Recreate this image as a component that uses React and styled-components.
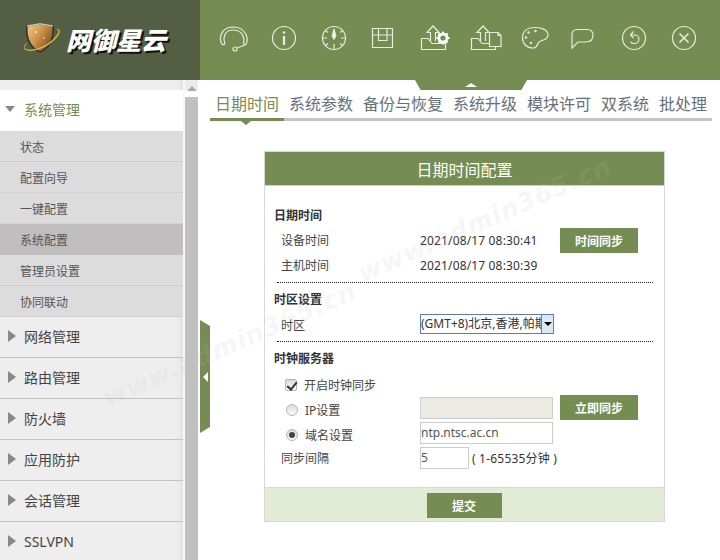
import React from 'react';
import styled, { createGlobalStyle } from 'styled-components';

const GREEN = '#758c52';
const FONT = '"Noto Sans", "Noto Sans CJK SC", sans-serif';

const Global = createGlobalStyle`
  html, body { margin: 0; padding: 0; background: #fff; }
  body { font-family: ${FONT}; color: #333; }
  * { box-sizing: border-box; }
`;

const Page = styled.div`
  position: relative; width: 720px; height: 560px; overflow: hidden;
  display: flex; flex-direction: column;
`;
const Header = styled.header`display: flex; height: 80px; flex: none; background: ${GREEN};`;
const LogoArea = styled.div`
  width: 200px; flex: none; background: #535e42;
  display: flex; align-items: center; padding: 0 0 2px 24px; gap: 4px;
`;
const LogoText = styled.div`
  font-family: "Noto Sans CJK SC", sans-serif; font-size: 25px; line-height: 30px; font-weight: 900; font-style: italic;
  color: #fff; text-shadow: 2px 2px 0 #111; white-space: nowrap;
`;
const IconNav = styled.nav`display: flex; padding: 20px 0 0 9px; align-items: flex-start;`;
const IconSlot = styled.div`width: 50px; height: 36px; display: flex; justify-content: center;`;
const Notch = styled.div`
  position: absolute; left: 415px; top: 80px; width: 112px; height: 10px;
  background: ${GREEN}; clip-path: polygon(0 0, 100% 0, 95% 100%, 5% 100%);
  &::after {
    content: ''; position: absolute; left: 50px; top: 3px;
    border-left: 6px solid transparent; border-right: 6px solid transparent; border-bottom: 4px solid #fff;
  }
`;

const Body = styled.div`flex: 1; display: flex; min-height: 0;`;
const Side = styled.aside`width: 200px; flex: none; display: flex; overflow: hidden;`;
const Menu = styled.div`
  width: 183px; flex: none; background: #eee; padding-top: 10px;
  box-shadow: inset -8px 0 8px -8px #d8d8d8;
`;
const GroupHead = styled.div`
  height: 41px; display: flex; align-items: center;
  gap: ${p => (p.$open ? 9 : 8)}px; padding: 0 0 ${p => (p.$open ? 4 : 2)}px ${p => (p.$open ? 5 : 8)}px;
  font-size: 14px; background: ${p => (p.$open ? '#fff' : 'transparent')};
  color: ${p => (p.$open ? GREEN : '#444')};
  border-bottom: ${p => (p.$open ? '0' : '1px solid #c2c2c2')};
`;
const ArrowDown = styled.i`
  width: 0; height: 0; border-left: 5.5px solid transparent; border-right: 5.5px solid transparent; border-top: 6px solid #888;
`;
const ArrowRight = styled.i`
  width: 0; height: 0; border-top: 6px solid transparent; border-bottom: 6px solid transparent; border-left: 8px solid #888;
`;
const SubItem = styled.div`
  height: 31px; padding: 1px 0 0 20px; display: flex; align-items: center; font-size: 12px; color: #555;
  background: ${p => (p.$active ? '#c0bebe' : '#dcdcdc')};
  border-bottom: 1px solid ${p => (p.$active ? '#c0bebe' : '#d0d0d0')};
`;
const ScrollTrack = styled.div`
  width: 17px; flex: none; padding: 6px 2px 0; background: linear-gradient(#ececec 0 10px, #fff 10px);
  display: flex; flex-direction: column; align-items: center; border-left: 2px solid #f7f7f7; border-right: 2px solid #fff;
`;
const ScrollUp = styled.i`
  width: 0; height: 0; border-left: 5px solid transparent; border-right: 5px solid transparent; border-bottom: 5px solid #aaa;
`;
const ScrollThumb = styled.div`width: 13px; flex: 1; margin-top: 6px; background: #c0c0c0;`;

const Main = styled.main`position: relative; flex: 1; padding: 0 8px 0 10px; min-width: 0;`;
const Handle = styled.div`
  position: absolute; left: 0; top: 240px; width: 10px; height: 113px; background: ${GREEN};
  clip-path: polygon(0 0, 100% 6px, 100% 107px, 0 100%);
  &::after {
    content: ''; position: absolute; left: 3px; top: 52px;
    border-top: 5px solid transparent; border-bottom: 5px solid transparent; border-right: 5px solid #fff;
  }
`;
const Tabs = styled.div`display: flex; height: 41px; padding-top: 12px; border-bottom: 3px solid #c8c4c4;`;
const Tab = styled.div`
  position: relative; height: 29px; padding: 0 5px; font-size: 16px; line-height: 24px; white-space: nowrap;
  color: ${p => (p.$active ? GREEN : '#667078')};
  ${p => p.$active && `
    border-bottom: 3px solid ${GREEN};
    &::after {
      content: ''; position: absolute; left: 31px; top: 29px;
      border-left: 5px solid transparent; border-right: 5px solid transparent; border-top: 4px solid ${GREEN};
    }
  `}
`;
const Panel = styled.section`
  width: 401px; height: 371px; margin: 30px 0 0 54px; border: 1px solid #d8d8d8;
  display: flex; flex-direction: column;
`;
const PanelTitle = styled.h2`
  margin: 0; height: 34px; flex: none; background: ${GREEN}; color: #fff; font-size: 16px; font-weight: 400;
  display: flex; align-items: center; justify-content: center; border-bottom: 1px solid #ccd3c2;
`;
const PanelBody = styled.div`flex: 1; padding: 18px 0 0 9px; font-size: 12px;`;
const SectionTitle = styled.h3`margin: 0; height: 24px; padding-bottom: 2px; display: flex; align-items: center; font-size: 12px; font-weight: 700; color: #333;`;
const Row = styled.div`display: flex; align-items: center; height: ${p => p.$h || 25}px; padding-left: 7px; color: #444;`;
const Label = styled.div`
  width: 139px; flex: none; padding-top: ${p => p.$shift || 0}px; padding-bottom: ${p => p.$up || 0}px;
  display: flex; align-items: center; gap: ${p => p.$gap || 0}px;
`;
const Value = styled.div`width: 140px; flex: none; display: flex; align-items: center; color: #333; letter-spacing: .15px;`;
const Divider = styled.hr`margin: 4px 11px 5px 3px; height: 0; border: 0; border-top: 1px dotted #222;`;
const Button = styled.button`
  height: 25px; width: ${p => p.$w || 78}px; border: 0; padding: 0; background: ${GREEN}; color: #fff;
  font: 700 12px ${FONT};
`;
const Field = styled.input`
  height: 22px; width: ${p => p.$w || 133}px; border: 1px solid #ccc; padding: 0; font: 12px ${FONT}; color: #555;
  background: ${p => (p.disabled ? '#ebebe4' : '#fff')}; outline: 0;
`;
const SelectBox = styled.div`
  display: flex; height: 20px; width: 134px; border: 1px solid #5a7db5; margin-top: -1px; font-size: 12px; line-height: 18px; color: #333;
`;
const SelectValue = styled.div`flex: 1; overflow: hidden; white-space: nowrap;`;
const SelectArrow = styled.div`
  width: 12px; flex: none; background: #dbe8f8; border-left: 1px solid #5a7db5; display: flex; align-items: center; justify-content: center;
  &::after { content: ''; border-left: 4px solid transparent; border-right: 4px solid transparent; border-top: 4px solid #000; }
`;
const Check = styled.input`
  appearance: none; margin: 0 0 0 ${p => (p.type === 'radio' ? 5 : 4)}px; flex: none; width: 12px; height: 12px; border: 1px solid #b5b5b5;
  border-radius: ${p => (p.type === 'radio' ? '50%' : '2px')};
  background: linear-gradient(#dcdcdc, #fafafa);
  position: relative;
  &:checked::after {
    content: ''; position: absolute;
    ${p => p.type === 'radio'
      ? 'left: 2px; top: 2px; width: 6px; height: 6px; border-radius: 50%; background: #444;'
      : 'left: 3px; top: 0; width: 4px; height: 8px; border: solid #333; border-width: 0 2px 2px 0; transform: rotate(40deg);'}
  }
`;
const Hint = styled.span`margin-left: 3px; white-space: nowrap; color: #333; letter-spacing: .2px;`;
const Footer = styled.div`
  height: 34px; flex: none; background: #e1ebd5; border-top: 1px solid #d8d8d8;
  display: flex; justify-content: center; padding: 5px 1px 0 0;
`;
const Watermark = styled.div`
  position: absolute; left: ${p => p.$x}px; top: ${p => p.$y}px; width: 280px; text-align: center;
  font: italic 700 25px/30px "DejaVu Sans", sans-serif; letter-spacing: 1px; white-space: nowrap;
  color: rgba(190,190,190,.14); transform: rotate(-23.7deg); pointer-events: none;
`;

const IconSvg = styled.svg`
  width: 36px; height: 36px; fill: none; stroke: #e6ecde; stroke-width: 1.2; display: block; overflow: visible;
`;

const Icon = ({ children }) => <IconSvg viewBox="0 0 36 36">{children}</IconSvg>;
const Tray = () => (
  <>
    <path d="M5.5 18.5H12L16 23.5H29.5V29.5H5.5Z" />
    <path d="M14.5 21V12.5H11L17 6L23 12.5H19.5V21" />
  </>
);
const icons = [
  <Icon key="a">
    <path d="M6.5 25C2.5 19 4 7.5 17 7C30 7 33 19 30 24.5" />
    <path d="M9 24C6.5 17 9 10 17 10C26 10 29 17 27.5 24" />
    <path d="M6.5 25L9 24M30 24.5L27.5 24M21 28L29 25" />
    <circle cx="19" cy="29" r="2" />
  </Icon>,
  <Icon key="b">
    <circle cx="18" cy="18" r="11.5" />
    <path d="M18 16V25" strokeWidth="2.2" />
    <circle cx="18" cy="12.5" r="1.3" fill="#e6ecde" stroke="none" />
  </Icon>,
  <Icon key="c">
    <circle cx="18" cy="18" r="11.5" />
    <path d="M18 9L19.8 16L18 19L16.2 16Z" fill="#f2f5ec" />
    <path d="M18 24V29.5M6.5 18H11M25 18H29.5M9.5 10.5L12 12.5M26.5 10.5L24 12.5M9.5 25.5L12 23.5M26.5 25.5L24 23.5" />
  </Icon>,
  <Icon key="d">
    <path d="M6.5 8.5H26.5V27.5H6.5ZM6.5 15H26.5M12.5 8.5V20.5H21V8.5" />
  </Icon>,
  <Icon key="e">
    <Tray />
    <circle cx="27" cy="18" r="4" strokeWidth="3" stroke="#fff" fill={GREEN} />
    <path d="M27 11.5V24.5M20.5 18H33.5M22.4 13.4L31.6 22.6M31.6 13.4L22.4 22.6" stroke="#fff" strokeWidth="1.8" />
    <circle cx="27" cy="18" r="2.6" fill={GREEN} stroke="none" />
  </Icon>,
  <Icon key="f">
    <Tray />
    <path d="M23.5 12.5H32L35 15.5V26.5H23.5Z" fill={GREEN} />
    <path d="M32 12.5V15.5H35" />
  </Icon>,
  <Icon key="g">
    <path d="M19 7.5C11 7.5 6.5 11.5 6.5 18C6.5 24 11 28 17 28C22 28 20.5 24 23 22C26 20 32 20 32 15C32 10 26 7.5 19 7.5Z" />
    <g fill="#e6ecde" stroke="none">
      <circle cx="12.5" cy="12.5" r="1.2" /><circle cx="19.5" cy="11" r="1.2" /><circle cx="10" cy="17.5" r="1.2" /><circle cx="15" cy="23" r="1.2" />
    </g>
  </Icon>,
  <Icon key="h">
    <path d="M11 9.5H21C25 9.5 27 12 27 15C27 19 25 22 20 22H12L6 28V15C6 12 7.5 9.5 11 9.5Z" />
  </Icon>,
  <Icon key="i">
    <circle cx="18" cy="18" r="11.5" />
    <path d="M15 15H18.5C21 15 23 16.8 23 19C23 21.5 21 23.5 18 23.5C16.5 23.5 15.5 23 14.5 22" />
    <path d="M17.5 11.5L14.5 15L17.5 18" />
  </Icon>,
  <Icon key="j">
    <circle cx="18" cy="18" r="11.5" />
    <path d="M13.5 13.5L22.5 22.5M22.5 13.5L13.5 22.5" strokeWidth="1.6" />
  </Icon>,
];

const Shield = () => (
  <svg width="38" height="32" viewBox="0 0 38 32" style={{ display: 'block', flex: 'none' }}>
    <defs>
      <linearGradient id="sh" x1="0" y1="0" x2="1" y2="0.7">
        <stop offset="0" stopColor="#f4cd8c" />
        <stop offset=".5" stopColor="#cf9348" />
        <stop offset="1" stopColor="#7a4c1e" />
      </linearGradient>
    </defs>
    <path d="M3 3L16 0.8L29 3C30 14 27 24 16 29C5 24 2 14 3 3Z" fill="url(#sh)" stroke="#33332f" strokeWidth="1.6" />
    <path d="M3 3L16 0.8L29 3" fill="none" stroke="#c4c4ba" strokeWidth="1.4" />
    <circle cx="12" cy="9" r="1" fill="#fff3d0" />
    <circle cx="20" cy="15" r="0.8" fill="#fff3d0" />
    <path d="M1 26C6 29.5 24 25 33 13C36 9 36 7 33 6" fill="none" stroke="#dcb63e" strokeWidth="1.3" />
    <path d="M1 26C-1 24 1 22 3 20" fill="none" stroke="#dcb63e" strokeWidth="1" />
  </svg>
);

const subs = ['状态', '配置向导', '一键配置', '系统配置', '管理员设置', '协同联动'];
const groups = ['网络管理', '路由管理', '防火墙', '应用防护', '会话管理', 'SSLVPN'];
const tabs = ['日期时间', '系统参数', '备份与恢复', '系统升级', '模块许可', '双系统', '批处理'];

export default function App() {
  return (
    <Page>
      <Global />
      <Header>
        <LogoArea><Shield /><LogoText>网御星云</LogoText></LogoArea>
        <IconNav>{icons.map((ic, i) => <IconSlot key={i}>{ic}</IconSlot>)}</IconNav>
      </Header>
      <Notch />
      <Body>
        <Side>
          <Menu>
            <GroupHead $open><ArrowDown />系统管理</GroupHead>
            {subs.map(s => <SubItem key={s} $active={s === '系统配置'}>{s}</SubItem>)}
            {groups.map(g => <GroupHead key={g}><ArrowRight />{g}</GroupHead>)}
          </Menu>
          <ScrollTrack><ScrollUp /><ScrollThumb /></ScrollTrack>
        </Side>
        <Main>
          <Handle />
          <Tabs>
            {tabs.map((t, i) => <Tab key={t} $active={i === 0}>{t}</Tab>)}
          </Tabs>
          <Panel>
            <PanelTitle>日期时间配置</PanelTitle>
            <PanelBody>
              <SectionTitle>日期时间</SectionTitle>
              <Row><Label $up={2}>设备时间</Label><Value>2021/08/17 08:30:41</Value><Button>时间同步</Button></Row>
              <Row><Label $up={2}>主机时间</Label><Value>2021/08/17 08:30:39</Value></Row>
              <Divider />
              <SectionTitle>时区设置</SectionTitle>
              <Row>
                <Label>时区</Label>
                <SelectBox><SelectValue>(GMT+8)北京,香港,帕斯</SelectValue><SelectArrow /></SelectBox>
              </Row>
              <Divider />
              <SectionTitle>时钟服务器</SectionTitle>
              <Row $h={24}>
                <Label $shift={3} $gap={7}><Check type="checkbox" defaultChecked />开启时钟同步</Label>
              </Row>
              <Row>
                <Label $shift={5} $gap={7}><Check type="radio" name="m" />IP设置</Label>
                <Value><Field disabled /></Value>
                <Button>立即同步</Button>
              </Row>
              <Row>
                <Label $shift={5} $gap={7}><Check type="radio" name="m" defaultChecked />域名设置</Label>
                <Value><Field defaultValue="ntp.ntsc.ac.cn" /></Value>
              </Row>
              <Row>
                <Label>同步间隔</Label>
                <Value><Field $w={49} defaultValue="5" /><Hint>( 1-65535分钟 )</Hint></Value>
              </Row>
            </PanelBody>
            <Footer><Button $w={75}>提交</Button></Footer>
          </Panel>
        </Main>
      </Body>
      <Watermark $x={345} $y={205}>www.admin365.cn</Watermark>
      <Watermark $x={90} $y={330}>www.admin365.cn</Watermark>
    </Page>
  );
}
